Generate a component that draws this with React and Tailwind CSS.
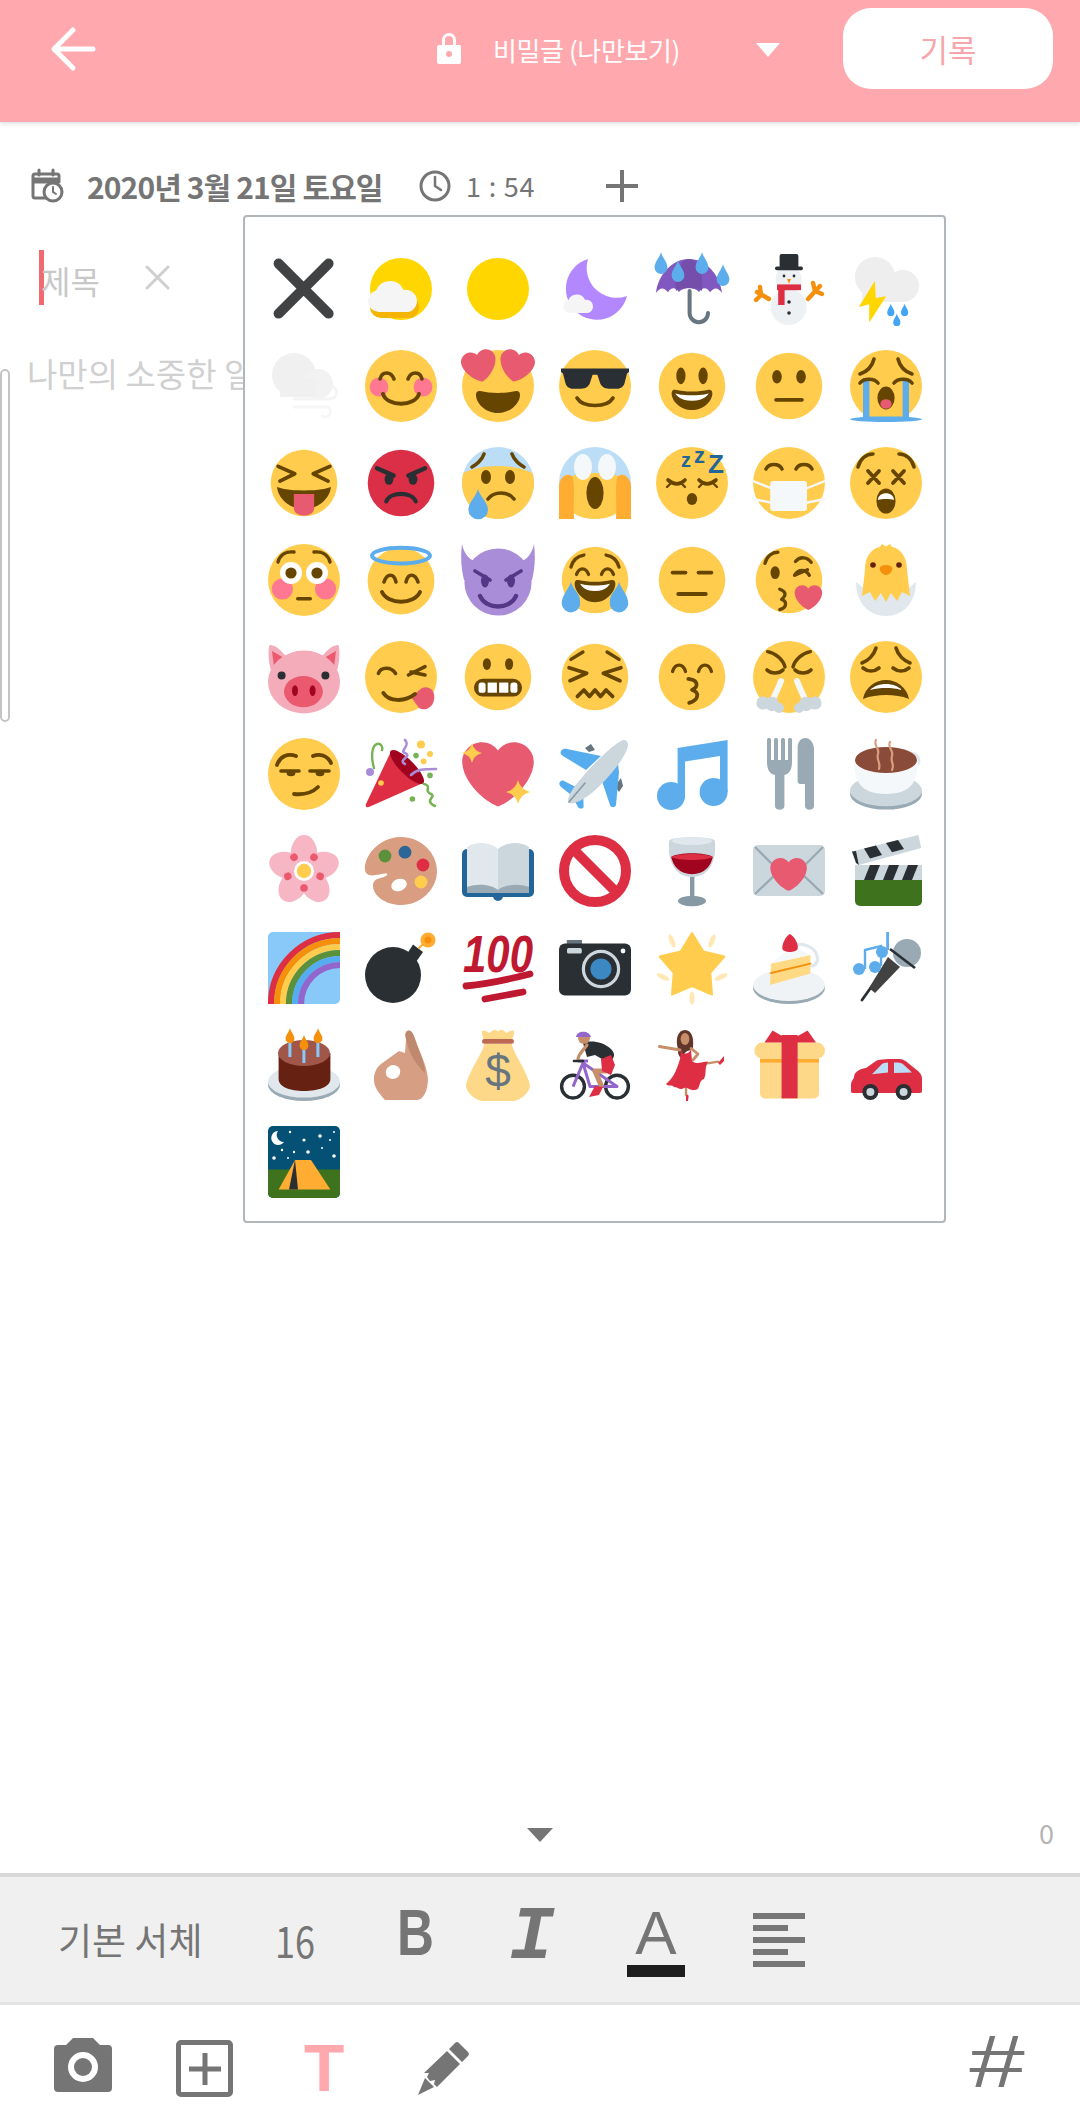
import React from 'react';

const Y = '#FFCC4D';
const B = '#664500';
const HEART = 'M35.885 11.833c0-5.45-4.418-9.868-9.867-9.868-3.308 0-6.227 1.633-8.018 4.129-1.791-2.496-4.71-4.129-8.017-4.129-5.45 0-9.868 4.417-9.868 9.868 0 .772.098 1.52.266 2.241C1.751 22.587 11.216 31.568 18 34.034c6.783-2.466 16.249-11.447 17.617-19.959.17-.721.268-1.469.268-2.242z';
const OPEN_MOUTH = 'M18 21c-3.6 0-6-.4-9-1-.7-.1-2 0-2 2 0 4 4.6 9 11 9s11-5 11-9c0-2-1.3-2.1-2-2-3 .6-5.4 1-9 1z';
const FONT = 'Liberation Sans';

const Face = ({ c = Y, children }) => (
  <>
    <circle cx="18" cy="18" r="18" fill={c} />
    {children}
  </>
);
const S = ({ d, c = B, w = 1.8 }) => (
  <path d={d} fill="none" stroke={c} strokeWidth={w} strokeLinecap="round" strokeLinejoin="round" />
);
const F = ({ d, c = B }) => <path d={d} fill={c} />;
const O = ({ x, y, r, c = B }) => <circle cx={x} cy={y} r={r} fill={c} />;
const E = ({ x, y, a = 2.5, b = 3.5, c = B, t = 0 }) => (
  <ellipse cx={x} cy={y} rx={a} ry={b} fill={c} transform={t ? `rotate(${t} ${x} ${y})` : undefined} />
);
const Cloud = ({ x, y, w, c = '#F5F5F5' }) => (
  <path
    transform={`translate(${x} ${y}) scale(${w / 25})`}
    d="M5.5 17.5A5.5 5.5 0 0 1 4 6.7 7.5 7.5 0 0 1 17.8 6.5 5.4 5.4 0 0 1 20 17.5Z"
    fill={c}
  />
);
const Heart = ({ x, y, w, c = '#E75A70', r = 0 }) => (
  <path transform={`translate(${x} ${y}) rotate(${r} ${w / 2} ${w / 2}) scale(${w / 36})`} d={HEART} fill={c} />
);
const Drop = ({ x, y, s = 1, c = '#5DADEC' }) => (
  <path transform={`translate(${x} ${y}) scale(${s})`} d="M0-4C.6-2 2-1 2 .8A2 2 0 0 1-2 .8C-2-1-.6-2 0-4z" fill={c} />
);
const Sparkle = ({ x, y, r, c = Y }) => (
  <path
    d={`M${x} ${y - r}Q${x + r * 0.2} ${y - r * 0.2} ${x + r} ${y}Q${x + r * 0.2} ${y + r * 0.2} ${x} ${y + r}Q${x - r * 0.2} ${y + r * 0.2} ${x - r} ${y}Q${x - r * 0.2} ${y - r * 0.2} ${x} ${y - r}z`}
    fill={c}
  />
);
const star5 = (cx, cy, R, r) =>
  Array.from({ length: 10 }, (_, i) => {
    const a = (Math.PI / 5) * i - Math.PI / 2;
    const q = i % 2 ? r : R;
    return `${(cx + q * Math.cos(a)).toFixed(2)},${(cy + q * Math.sin(a)).toFixed(2)}`;
  }).join(' ');

const RAINBOW = [
  [34.5, '#DD2E44'],
  [31.5, '#F4900C'],
  [28.5, '#FFCC4D'],
  [25.5, '#5C913B'],
  [22.5, '#55ACEE'],
  [19.5, '#9266CC'],
];
const STARS = [[11, 3, 0.6], [18, 7, 0.8], [26, 5, 0.9], [31, 7, 0.5], [33, 3, 0.5], [7, 12, 0.6], [13, 13, 0.6], [20, 13, 0.9], [27, 11, 0.5], [33, 15, 0.9], [3, 16, 0.9], [10, 16, 0.5]];

// small: the face takes 66px of the 72px cell
const EMOJI = [
  { n: 'close', c: <S d="M5.3 5.3L30.3 30.3M30.3 5.3L5.3 30.3" c="#414244" w={5} /> },
  { n: 'sun cloud', c: <><O x={18} y={18} r={15.5} c="#FFD600" /><Cloud x={2.5} y={15} w={25} c="#F4B400" /><Cloud x={1.5} y={12} w={25} /></> },
  { n: 'sun', c: <O x={18} y={18} r={15.5} c="#FFD600" /> },
  { n: 'moon', c: <><F d="M14.5 3A15.5 15.5 0 1 0 34 21.5 15 15 0 0 1 14.5 3z" c="#B388FF" /><Cloud x={2.3} y={19.5} w={15} /></> },
  { n: 'umbrella', c: <><S d="M16.8 19V30A4.6 4.6 0 0 0 26 30" c="#66757F" w={2} /><F d="M16.5 3C8 3 1 11 0 20 2 17 4 17 6 19.6 7.5 17 10 17 11.5 19.6 13 17 20 17 21.5 19.6 23 17 25.5 17 27 19.6 29 17 31 17 33 20 32 11 25 3 16.5 3z" c="#8157C0" /><F d="M16.5 3C12 3 9 12 10 19 12 17 21 17 23 19 24 12 21 3 16.5 3z" c="#744EAA" /><Drop x={2.5} y={6} s={1.6} /><Drop x={11} y={10} s={1.6} /><Drop x={23} y={6} s={1.6} /><Drop x={33.5} y={12} s={1.6} /></> },
  { n: 'snowman', c: <><S d="M8 23L2 19.5M4 21L1.5 23.5M4 21L3.5 17M27.5 23L33.5 16.5M31 19L34.5 20.5M31 19L30 15" c="#F4900C" w={2.2} /><O x={17.8} y={27} r={9} c="#EEF1F3" /><O x={17.8} y={13} r={6.5} c="#EEF1F3" /><rect x="13.3" y=".5" width="9.4" height="7" rx="1" fill="#292F33" /><rect x="11" y="6.8" width="14" height="1.8" rx=".9" fill="#292F33" /><O x={15.5} y={11.5} r={.7} c="#292F33" /><O x={20.5} y={11.5} r={.7} c="#292F33" /><F d="M17 13H19L18 15.4z" c="#F4900C" /><rect x="12" y="15.7" width="12" height="2.9" fill="#DD2E44" /><rect x="12.6" y="18" width="3.2" height="8" fill="#DD2E44" /><O x={18} y={24.5} r={.9} c="#292F33" /><O x={18} y={30} r={.9} c="#292F33" /></> },
  { n: 'storm', c: <><O x={12.5} y={12} r={10} c="#EEEEEE" /><O x={26.5} y={16.5} r={8} c="#EEEEEE" /><rect x="6" y="14" width="20" height="10.5" fill="#EEEEEE" /><polygon points="12.4,14 4.4,27 9.6,25.6 9.6,34.7 18.1,21.6 12.9,22.5" fill="#FFD600" /><Drop x={20.4} y={29} s={.9} c="#42A5F5" /><Drop x={27.3} y={29} s={.9} c="#42A5F5" /><Drop x={23.4} y={34} s={.9} c="#42A5F5" /></> },

  { n: 'wind', c: <><O x={13} y={12.5} r={11} c="#F0F0F0" /><O x={25} y={17} r={7.5} c="#F2F2F2" /><rect x="6" y="14" width="18" height="9.5" fill="#F0F0F0" /><S d="M13 24.5H31A3 3 0 0 0 31 18" c="#F4F4F4" w={1.4} /><S d="M13 28.5H30A2.5 2.5 0 0 1 27 33" c="#F6F6F6" w={1.4} /></> },
  { n: 'blush', c: <Face><O x={7} y={18.5} r={4.7} c="#FF7892" /><O x={29} y={18.5} r={4.7} c="#FF7892" /><S d="M7.5 14.5C8.5 10.5 13 10.5 14.5 14.5M21.5 14.5C23 10.5 27.5 10.5 28.5 14.5" /><S d="M9 22C11 28.5 25 28.5 27 22" w={2} /></Face> },
  { n: 'heart eyes', c: <Face><F d="M18 21.5c-3.6 0-6-.4-9-1-.7-.1-2 0-2 2 0 4 4.6 9 11 9s11-5 11-9c0-2-1.3-2.1-2-2-3 .6-5.4 1-9 1z" /><Heart x={0} y={-.6} w={17.5} r={-12} /><Heart x={18.5} y={-.6} w={17.5} r={12} /></Face> },
  { n: 'sunglasses', c: <Face><F d="M1 9.3H35V11L34 11.8 32.8 16.5C32.4 18.2 31 19.4 29 19.4H25C22.5 19.4 21 18 20.5 16.4L19.2 12.4H16.8L15.5 16.4C15 18 13.5 19.4 11 19.4H7C5 19.4 3.6 18.2 3.2 16.5L2 11.8 1 11z" c="#292F33" /><S d="M9 24C12 29 24 29 27 24" /></Face> },
  { n: 'smiley', small: 1, c: <Face><E x={12} y={12.5} a={2.5} b={4.5} /><E x={24} y={12.5} a={2.5} b={4.5} /><F d={OPEN_MOUTH} /><F d="M9 22s3 1 9 1 9-1 9-1-2 4-9 4-9-4-9-4z" c="#fff" /></Face> },
  { n: 'neutral', small: 1, c: <Face><E x={11.5} y={13} a={2.6} b={3.7} /><E x={24.5} y={13} a={2.6} b={3.7} /><rect x="10" y="24.5" width="16" height="2" rx="1" fill={B} /></Face> },
  { n: 'cry', c: <Face><rect x="6.5" y="14" width="3.2" height="20" fill="#5DADEC" /><rect x="26.3" y="14" width="3.2" height="20" fill="#5DADEC" /><ellipse cx="18" cy="34.6" rx="18" ry="1.4" fill="#5DADEC" /><S d="M5 12C8 11 11 8.5 12 4.5M31 12C28 11 25 8.5 24 4.5" /><S d="M5 16.5C7 14 12 14 14 16.5M22 16.5C24 14 29 14 31 16.5" /><E x={18} y={24} a={4.3} b={5.7} /><E x={18} y={27} a={2.8} b={2.4} c="#E75A70" /></Face> },

  { n: 'squint tongue', small: 1, c: <Face><S d="M4 9L13 13 5 17M32 9L23 13 31 17" w={2} /><F d="M3.5 20C5 21 10 22 18 22S31 21 32.5 20C32.5 25 27 32 18 32S3.5 25 3.5 20z" /><F d="M12.5 24H23.5V31.5C23.5 37 12.5 37 12.5 31.5z" c="#E75A70" /></Face> },
  { n: 'pout', small: 1, c: <Face c="#DA2F47"><S d="M5 10L14 14M31 10L22 14" c="#292F33" w={2.4} /><E x={11.5} y={16} a={2.4} b={3} c="#292F33" /><E x={24.5} y={16} a={2.4} b={3} c="#292F33" /><S d="M10 28C12 22.5 24 22.5 26 28" c="#292F33" w={2.2} /></Face> },
  { n: 'cold sweat', c: <><O x={18} y={18} r={18} c="#BBDDF5" /><F d="M.7 13C5 11 10 9.5 18 9.5S31 11 35.3 13A18 18 0 1 1 .7 13z" c={Y} /><S d="M5 10C7 9 10 6.5 11 3.5M31 10C29 9 26 6.5 25 3.5" /><E x={12} y={15} /><E x={24} y={15} /><S d="M13 26C16 22 23 22 26 26" /><path d="M8 21C9 25 13 27.5 13 31.5A4.9 4.6 0 0 1 3.2 31.5C3.2 27.5 7 25 8 21z" fill="#5DADEC" /></> },
  { n: 'scream', c: <><O x={18} y={18} r={18} c="#BBDDF5" /><F d="M0 20C2 15 8 13 18 13S34 15 36 20C36 28 30 36 18 36S0 28 0 20z" c={Y} /><E x={12} y={10} a={4.5} b={6.5} c="#F5F8FA" /><E x={24} y={10} a={4.5} b={6.5} c="#F5F8FA" /><E x={18} y={23} a={4.3} b={8} /><F d="M0 36V20C0 14 6 12 7 16 8 20 7 28 7.5 36z" c="#FFAC33" /><F d="M36 36V20C36 14 30 12 29 16 28 20 29 28 28.5 36z" c="#FFAC33" /></> },
  { n: 'sleeping', c: <Face><S d="M6 16.5C9 19 12 19 14.5 16.5M21.5 16.5C24 19 27 19 30 16.5" /><S d="M7 18.5L5.5 20M13 18.5L14.5 20M23 18.5L21.5 20M29 18.5L30.5 20" w={1.2} /><E x={18} y={26} a={2.6} b={3} /><text x={12.5} y={10} fontSize="10" fontWeight="bold" fontFamily={FONT} fill="#226699">z</text><text x={19} y={8} fontSize="11" fontWeight="bold" fontFamily={FONT} fill="#226699">z</text><text x={26} y={13} fontSize="13" fontWeight="bold" fontFamily={FONT} fill="#226699">Z</text></Face> },
  { n: 'mask', c: <Face><S d="M6.5 11C8 8 13 8 14.5 11M21.5 11C23 8 28 8 29.5 11" /><S d="M0 17L10 21M0 26L10 28M36 17L26 21M36 26L26 28" c="#F5F8FA" w={1.2} /><rect x="8.6" y="17" width="18.4" height="15" rx="1.5" fill="#F5F8FA" /></Face> },
  { n: 'dizzy', c: <Face><S d="M4 10C5 6 8 3.5 11.5 3.5M32 10C31 6 28 3.5 24.5 3.5" /><S d="M9 12L14.5 18M14.5 12L9 18M21.5 12L27 18M27 12L21.5 18" w={1.9} /><E x={18} y={27} a={4.8} b={6.3} /><F d="M14 26.5C14 22 22 22 22 26.5 20 25.8 16 25.8 14 26.5z" c="#fff" /></Face> },

  { n: 'flushed', c: <Face><O x={7.2} y={22.5} r={5.3} c="#FF7892" /><O x={28.8} y={22.5} r={5.3} c="#FF7892" /><S d="M5 9C6 5.5 9 3.5 13 4M31 9C30 5.5 27 3.5 23 4" w={1.7} /><O x={11.5} y={14.5} r={5.5} c="#fff" /><O x={24.5} y={14.5} r={5.5} c="#fff" /><O x={11.5} y={14.5} r={2.8} /><O x={24.5} y={14.5} r={2.8} /><rect x="14" y="26.5" width="8" height="1.8" rx=".9" fill={B} /></Face> },
  { n: 'halo', c: <><O x={18} y={18.5} r={16.7} c={Y} /><ellipse cx="18" cy="5.8" rx="14.5" ry="3.9" fill="none" stroke="#5DADEC" strokeWidth="2" /><S d="M9.5 19C11 14.5 14.5 14.5 15.5 19M20.5 19C21.5 14.5 25 14.5 26.5 19" /><S d="M8.5 24C11.5 30.5 24.5 30.5 27.5 24" w={2} /></> },
  { n: 'devil', c: <><F d="M0 0C1 5 4 9 9 9H27C32 9 35 5 36 0 37 8 36 14 35 18H1C0 14-1 8 0 0z" c="#AA8DD8" /><O x={18} y={19} r={16.8} c="#AA8DD8" /><S d="M6.5 13.5L14 18M29.5 13.5L22 18" c="#553788" /><E x={11.5} y={18.5} a={2} b={3.2} c="#553788" /><E x={24.5} y={18.5} a={2} b={3.2} c="#553788" /><S d="M9 26C12 33 24 33 27 26" c="#553788" w={2.2} /></> },
  { n: 'joy', small: 1, c: <Face><S d="M5 11C6 7 9 5 12 4.5M31 11C30 7 27 5 24 4.5" /><S d="M8 15C9.5 11 13 11 14.5 15M21.5 15C23 11 26.5 11 28 15" /><F d="M18 19c-3.6 0-6-.4-9-1-.7-.1-2 0-2 2 0 4 4.6 10 11 10s11-6 11-10c0-2-1.3-2.1-2-2-3 .6-5.4 1-9 1z" /><F d="M10 20s3 1 8 1 8-1 8-1-1.5 4-8 4-8-4-8-4z" c="#fff" /><path d="M5 19C5.8 23 10 25 10 30A5 5 0 0 1 0 31C0 26 4 23 5 19z" fill="#5DADEC" /><path d="M31 19C30.2 23 26 25 26 30A5 5 0 0 0 36 31C36 26 32 23 31 19z" fill="#5DADEC" /></Face> },
  { n: 'expressionless', small: 1, c: <Face><rect x="6.5" y="13" width="9" height="2" rx="1" fill={B} /><rect x="20.5" y="13" width="9" height="2" rx="1" fill={B} /><rect x="9.5" y="24.5" width="17" height="2.2" rx="1.1" fill={B} /></Face> },
  { n: 'kiss heart', small: 1, c: <Face><S d="M5 9C6 5 9 3 12 3M21.5 8C24 5 28 5.5 30 8.5" /><E x={10.5} y={14} a={2.5} b={3.5} /><S d="M21 15.5C23 12 27 12 29 15.5M22 15L28 12.5" /><S d="M13 23C16 24 17 26 14 28.5 17 29.5 17 33 13 34" /><Heart x={21} y={20} w={15} /></Face> },
  { n: 'chick', c: <><path d="M3 19C3 30 10 36 18 36S33 30 33 19L27 24H9z" fill="#E1E8ED" /><F d="M7.5 13C7.5 5 12 2 15 1.5L16 0 18 1.2 20 0 21 1.5C24 2 28.5 5 28.5 13L30 26 26 24 23.5 28.5 20.5 24.5 18 29 15.5 24.5 12.5 28.5 10 24 6 26z" c={Y} /><O x={11.5} y={10.5} r={1.4} c="#662113" /><O x={24.5} y={10.5} r={1.4} c="#662113" /><F d="M14.8 12C15.5 10 20.5 10 21.2 12 21 14.5 19 15.5 18 15.5 17 15.5 15 14.5 14.8 12z" c="#F4900C" /></> },

  { n: 'pig', c: <><F d="M.7 2C4 2 7 5 10 9L2 16C0 11 0 5 .7 2zM35.3 2C32 2 29 5 26 9L34 16C36 11 36 5 35.3 2z" c="#F4ABBA" /><F d="M2 5L8 8.5 3 13zM34 5L28 8.5 33 13z" c="#EA596E" /><ellipse cx="18" cy="20.5" rx="18" ry="15.7" fill="#F4ABBA" /><E x={17.7} y={25.3} a={9.7} b={7.8} c="#EA596E" /><E x={13.5} y={24.8} a={1.5} b={2.7} c="#A0041E" /><E x={22.3} y={24.8} a={1.5} b={2.7} c="#A0041E" /><O x={6.8} y={17.3} r={2} c="#292F33" /><O x={28.7} y={17.3} r={2} c="#292F33" /></> },
  { n: 'yum', c: <Face><S d="M6.7 16.2C8 12.8 13 12.8 15.3 16.2M21.7 17L30 12.8M23 15.5L30 17" /><F d="M23 28L28.5 23.5C32 22 35.5 25 34.5 29.5 33.5 34 29.5 35 27 33.5z" c="#E75A70" /><S d="M9.2 26C12 30.5 20 30.5 25 26.5" w={2} /></Face> },
  { n: 'grimace', small: 1, c: <Face><E x={12} y={11} a={2.2} b={3.2} /><E x={24} y={11} a={2.2} b={3.2} /><rect x="5" y="19" width="26" height="9.5" rx="4.7" fill={B} /><rect x="7.5" y="21" width="3.8" height="5.5" rx="1.4" fill="#fff" /><rect x="12.4" y="21" width="5" height="5.5" fill="#fff" /><rect x="18.6" y="21" width="5" height="5.5" fill="#fff" /><rect x="24.7" y="21" width="3.8" height="5.5" rx="1.4" fill="#fff" /></Face> },
  { n: 'confounded', small: 1, c: <Face><S d="M5 8.5L11.5 4.5M31 8.5L24.5 4.5" /><S d="M4 13L13.5 16 4.5 20M32 13L22.5 16 31.5 20" w={2} /><S d="M8.5 28.5L12 25 15 28.5 18 25 21 28.5 24 25 27.5 28.5" w={2} /></Face> },
  { n: 'kiss closed', small: 1, c: <Face><S d="M7.5 15C9 10.5 13 10.5 14.5 15M21.5 15C23 10.5 27 10.5 28.5 15" /><S d="M16 19C21 19.5 22 23 18 25 22 26 22 30.5 16.5 32" w={2} /></Face> },
  { n: 'triumph', c: <Face><S d="M7.3 5.3C11 6 15 9 16 13M28.7 5.3C25 6 21 9 20 13" w={1.7} /><S d="M7 14.5C9 16.5 13 16.5 15 14.5M21 14.5C23 16.5 27 16.5 29 14.5" /><S d="M14 20C12.5 24 11 27 9 31M22 20C23.5 24 25 27 27 31" c="#F5F8FA" w={3} /><O x={5} y={31} r={3.3} c="#CCD6DD" /><O x={9.5} y={31.5} r={3.6} c="#CCD6DD" /><O x={13} y={33.5} r={2.5} c="#CCD6DD" /><O x={31} y={31} r={3.3} c="#CCD6DD" /><O x={26.5} y={31.5} r={3.6} c="#CCD6DD" /><O x={23} y={33.5} r={2.5} c="#CCD6DD" /></Face> },
  { n: 'weary', c: <Face><S d="M6 11C9 10 12 7 13 3.5M30 11C27 10 24 7 23 3.5" /><S d="M6.5 13.5C9 15.5 12 15.5 14.5 13.5M21.5 13.5C24 15.5 27 15.5 29.5 13.5" /><F d="M6.5 29C7.5 23 13 19.5 18 19.5S28.5 23 29.5 29C26 27.5 22 27 18 27S10 27.5 6.5 29z" /><F d="M10 24.5C12 22.5 15 21.5 18 21.5S24 22.5 26 24.5C23 23.8 21 23.5 18 23.5S13 23.8 10 24.5z" c="#fff" /></Face> },

  { n: 'smirk', c: <Face><S d="M4.5 13.5C6 9 10 7.5 14 9M22.5 9C26 7.5 30 9 31.5 12.5" w={1.9} /><S d="M6.5 16.5H15.5M21 16.5H30.5" /><E x={11.5} y={17.5} a={2.2} b={1.6} /><E x={26} y={17.5} a={2.2} b={1.6} /><S d="M13 28C18 28.5 22 27.5 25 24.5" w={1.9} /></Face> },
  { n: 'party', c: <><F d="M13 6.7L.5 33C0 34.5 1 35 2.5 34.3L29 22.5z" c="#DD2E44" /><ellipse cx="21" cy="14.5" rx="11.5" ry="3.6" fill="#A0041E" transform="rotate(45 21 14.5)" /><S d="M4.5 15C2.5 8 4 3.5 6 3 8 2.5 9 4.5 8.5 6" c="#77B255" w={1.2} /><S d="M20 13C16 11 24 9 20 7.5 17 6.5 23 4 20 1" c="#AA8DD8" w={1.3} /><S d="M23 18.5C26 15.5 29 15.5 35.5 15.5" c="#AA8DD8" w={1.3} /><S d="M29.5 23C34 24 29 26.5 33 28 36 29.5 29 31 35 34" c="#77B255" w={1.3} /><O x={2.5} y={17} r={2} c="#AA8DD8" /><O x={28} y={3.3} r={2} c={Y} /><O x={32.5} y={8} r={1.5} c={Y} /><O x={29.3} y={11.7} r={1.5} c={Y} /><O x={25.5} y={8.8} r={1.4} c="#77B255" /><O x={32.5} y={18.7} r={1.4} c="#77B255" /><O x={23.7} y={30.5} r={1.4} c="#77B255" /><O x={8} y={22.5} r={1.4} c={Y} /></> },
  { n: 'sparkling heart', c: <><Heart x={0} y={.2} w={36} /><Sparkle x={5} y={7.5} r={5} /><Sparkle x={28} y={27} r={6} /></> },
  { n: 'airplane', c: <><F d="M13 5L16 3 18 6 15 7zM28 24L31 20 32 24 30 27z" c="#66757F" /><F d="M1 6.5C.5 7.5 1 8.5 2 9L13.5 16 21 9 4 5.5C3 5.3 1.5 5.5 1 6.5zM21 20L25.5 33.5C26 35 28 35 28.5 33.5L30 17 29 9z" c="#55ACEE" /><F d="M.2 22.5C0 23 .5 24 1 24.5L5.5 28 9.5 25 2.5 21.5C1.5 21 .5 21.5.2 22.5zM10 26L7 30 9.5 34.5C10 35.5 12 35.5 12.3 34.5L12 24z" c="#55ACEE" /><path d="M31.5 1.2C33 .5 35 2 34.5 4 33 10 26 19 17 27 12 31 7.5 33.5 5 32.5 3.5 31 6 26 10 21.5 17 13 26 4 31.5 1.2z" fill="#CCD6DD" /><S d="M5 32L13 22.5" c="#8899A6" w={.8} /></> },
  { n: 'music', c: <><F d="M10.8 5L35.8 1V27H32V9L14.5 11.8V30H10.8z" c="#5DADEC" /><O x={7.5} y={29} r={7} c="#5DADEC" /><O x={28.8} y={27} r={7} c="#5DADEC" /></> },
  { n: 'cutlery', c: <><F d="M7 1C7-.3 9-.3 9 1V11H10.5V1C10.5-.3 12.5-.3 12.5 1V11H14V1C14-.3 16-.3 16 1V11H17.5V1C17.5-.3 19.5-.3 19.5 1V12C19.5 16 18 18 15.7 18.5V34C15.7 36.5 11 36.5 11 34V18.5C8.5 18 7 16 7 12z" c="#99AAB5" /><F d="M26 0C29 0 30.5 3 30.5 6V34C30.5 36.5 26 36.5 26 34V23H23.5C23 23 22.3 22.5 22.3 21.5V5C22.3 2 24 0 26 0z" c="#99AAB5" /></> },
  { n: 'coffee', c: <><ellipse cx="18" cy="28" rx="18" ry="7.8" fill="#99AAB5" /><ellipse cx="18" cy="26.3" rx="18" ry="7.8" fill="#CCD6DD" /><S d="M27 8A5 4 0 0 1 34.5 11C34.5 13 32.5 15 31 15" c="#E1E8ED" w={1.5} /><path d="M2 11C2 20 4 28 18 28S34 20 34 11z" fill="#F5F8FA" /><ellipse cx="18" cy="11" rx="15.5" ry="6.5" fill="#8A4B38" /><S d="M13 1C11.5 4 15 5 14 8S15.5 12 14.5 15.5M20 2C18.5 5 22 6 21 9S22.5 13 21 16" c="#D99E82" w={1.1} /></> },

  { n: 'blossom', c: <>{[0, 72, 144, 216, 288].map((a) => <ellipse key={a} cx="18" cy="9.3" rx="6.6" ry="9.3" fill="#F7B6C4" transform={`rotate(${a} 18 18)`} />)}<O x={18} y={18} r={8} c="#F7B6C4" />{[36, 108, 180, 252, 324].map((a) => <circle key={a} cx="18" cy="9.5" r="1.9" fill="#EA596E" transform={`rotate(${a} 18 18)`} />)}<O x={18} y={18} r={5} c="#FFFFFF" /><O x={18} y={18} r={3.6} c={Y} /></> },
  { n: 'palette', c: <><F d="M18 1C28 1 36 9 36 18S28 35 18 35C10 35 4 30 4 25.5 4 21 9 22 11 20 12 18 5 21 2 20-1 19-.5 14 2 10 5 5 11 1 18 1z" c="#D99E82" /><O x={10} y={10.5} r={3.2} c="#5C913B" /><O x={20} y={8.6} r={3.2} c="#2A6797" /><O x={29} y={15} r={3.2} c="#DD2E44" /><O x={28} y={23.5} r={3.2} c={Y} /><E x={17} y={25} a={4} b={3} c="#fff" t={-20} /></> },
  { n: 'book', c: <><rect y="7" width="36" height="24" rx="2.5" fill="#226699" /><O x={18} y={30.5} r={2.5} c="#226699" /><F d="M2.5 6C7 3 14 3.5 18 7V28H2.5z" c="#E1E8ED" /><F d="M33.5 6C29 3 22 3.5 18 7V28H33.5z" c="#CCD6DD" /><F d="M2.5 26C8 24 15 25 18 27.5 21 25 28 24 33.5 26V29H2.5z" c="#99AAB5" /></> },
  { n: 'no entry', c: <><circle cx="18" cy="18" r="15.5" fill="none" stroke="#DD2E44" strokeWidth="5" /><path d="M7 7L29 29" stroke="#DD2E44" strokeWidth="5" /></> },
  { n: 'wine', c: <><rect x="17" y="20" width="2.2" height="13" fill="#8899A6" /><ellipse cx="18" cy="33" rx="7" ry="2.6" fill="#8899A6" /><path d="M6.6 3C7 .5 29 .5 29.4 3 30.5 12 27 21 18 21S5.5 12 6.6 3z" fill="#CCD6DD" /><ellipse cx="18" cy="3" rx="10" ry="2" fill="#E1E8ED" /><path d="M7.6 11C11 8.5 25 8.5 28.4 11 27.5 15.5 24 19.6 18 19.6S8.5 15.5 7.6 11z" fill="#A0041E" /><path d="M7.6 11C11 9 25 9 28.4 11 25 13 11 13 7.6 11z" fill="#DD2E44" /></> },
  { n: 'love letter', c: <><rect y="5" width="36" height="25.5" rx="2.5" fill="#CCD6DD" /><path d="M1 6L15 20M35 6L21 20M1 29.5L13 18M35 29.5L23 18" stroke="#99AAB5" strokeWidth="1.2" fill="none" /><Heart x={8.6} y={10.5} w={18.4} /></> },
  { n: 'clapper', c: <><rect x="2.5" y="15" width="33.5" height="20.5" rx="2.5" fill="#3E721D" /><rect x="2.5" y="15" width="33.5" height="7.5" fill="#CCD6DD" /><polygon points="7,22.5 10,15 15,15 12,22.5" fill="#292F33" /><polygon points="16.5,22.5 19.5,15 24.5,15 21.5,22.5" fill="#292F33" /><polygon points="26,22.5 29,15 34,15 31,22.5" fill="#292F33" /><polygon points="1,8.3 34.2,0 35.6,6.5 4.4,15" fill="#CCD6DD" /><polygon points="7,6.8 13,5.3 16,10 10,11.7" fill="#292F33" /><polygon points="18,4 24,2.5 27,7 21,8.6" fill="#292F33" /><polygon points="1,8.3 3,8 4.4,15 3,14" fill="#292F33" /></> },

  { n: 'rainbow', c: <><rect width="36" height="36" rx="2.5" fill="#88C9F9" />{RAINBOW.map(([r, c]) => <path key={r} d={`M${36 - r} 36A${r} ${r} 0 0 1 36 ${36 - r}`} fill="none" stroke={c} strokeWidth="3.1" />)}</> },
  { n: 'bomb', c: <><polygon points="21,11 24,6.2 29,10 25.5,15" fill="#292F33" /><circle cx="14" cy="21.5" r="14" fill="#292F33" /><S d="M27 8L30 5" c="#FFAC33" w={1} /><O x={31.5} y={4} r={3.8} c="#FFAC33" /><O x={31.5} y={4} r={1.8} c="#F4900C" /></> },
  { n: '100', c: <><text x="0.5" y="20" fontSize="26" fontWeight="bold" fontStyle="italic" fontFamily={FONT} fill="#BE1931" textLength="35" lengthAdjust="spacingAndGlyphs">100</text><S d="M2 27C12 26 22 24 34 21" c="#BE1931" w={3.4} /><S d="M11.5 33.5L30.5 30" c="#BE1931" w={3.4} /></> },
  { n: 'camera', c: <><rect x="3.9" y="4" width="7.6" height="3" fill="#66757F" /><rect y="5.7" width="36" height="26" rx="3" fill="#292F33" /><rect x="4" y="8" width="7.4" height="2.8" rx=".8" fill="#CCD6DD" /><O x={32} y={9.5} r={1.2} c="#F5F8FA" /><circle cx="21" cy="18.5" r="8.8" fill="none" stroke="#CCD6DD" strokeWidth="1.6" /><O x={21} y={18.5} r={5.3} c="#3B88C3" /></> },
  { n: 'star', c: <><E x={8} y={4.5} a={1.3} b={3.5} c="#FFE8B6" t={-22} /><E x={28} y={4.5} a={1.3} b={3.5} c="#FFE8B6" t={22} /><E x={3.5} y={22.5} a={1.3} b={3.5} c="#FFE8B6" t={-65} /><E x={32.5} y={22.5} a={1.3} b={3.5} c="#FFE8B6" t={65} /><E x={18} y={33} a={1.3} b={3.3} c="#FFE8B6" /><polygon points={star5(18, 17.5, 17, 9.6)} fill={Y} stroke={Y} strokeWidth="1" strokeLinejoin="round" /></> },
  { n: 'slice', c: <><ellipse cx="18" cy="28" rx="18" ry="8" fill="#99AAB5" /><ellipse cx="18" cy="26.5" rx="18" ry="8" fill="#F0F3F5" /><S d="M19 7C24 5 31 7 32 12 33 15 31 17 29 17" c="#E1E8ED" w={1.6} /><polygon points="9,15.7 28.7,11.5 28.7,20.7 8.5,26.5" fill="#FFD983" /><S d="M9 20.5L28.7 15.8" c="#F4900C" w={1} /><polygon points="9,15.7 20,7 28.7,11.5" fill="#F5F8FA" /><F d="M18.4 1C20.5 2 23 6 22.3 8.5 21.5 10.5 15.3 10.5 14.7 8.5 14.3 6 16.5 2 18.4 1z" c="#DD2E44" /></> },
  { n: 'mic', c: <><S d="M6 34L11 27" c="#292F33" w={1.4} /><path d="M9.5 28L19 12.5 25 17.5 12.5 30.5z" fill="#424242" /><O x={28.5} y={10.5} r={7} c="#99AAB5" /><path d="M20 8.5L32.5 18" stroke="#292F33" strokeWidth="1.3" /><path d="M7.5 18.5V9L15.5 7V17" fill="none" stroke="#5DADEC" strokeWidth="1.2" /><O x={4.5} y={18.5} r={3} c="#5DADEC" /><O x={12.5} y={17.5} r={3} c="#5DADEC" /><path d="M18.8 0V9" stroke="#5DADEC" strokeWidth="1.4" /><O x={16} y={10} r={3} c="#5DADEC" /></> },

  { n: 'birthday', c: <><ellipse cx="18" cy="28" rx="18" ry="8" fill="#99AAB5" /><ellipse cx="18" cy="26.3" rx="18" ry="8" fill="#E1E8ED" /><path d="M5.3 12V25C5.3 29 11 31 18 31S31.2 29 31.2 25V12z" fill="#662113" /><ellipse cx="18" cy="12" rx="13" ry="6.5" fill="#A0574A" /><rect x="10.2" y="6" width="1.5" height="8" fill="#88C9F9" /><rect x="17.2" y="9" width="1.5" height="8" fill="#88C9F9" /><rect x="24.2" y="6" width="1.5" height="8" fill="#88C9F9" /><Drop x={11} y={4} s={1.1} c="#F4900C" /><Drop x={18} y={7.4} s={1.1} c="#F4900C" /><Drop x={25} y={4} s={1.1} c="#F4900C" /></> },
  { n: 'ok hand', c: <><F d="M21 1C23 0 24 2 25 5 27 11 31 18 31.5 25 31.5 31 29 35.5 26 35.5H10C7 32 4 29 4.5 24 5 21 6 19 8 17.5L17 11 20 12 20.5 5C20 3 20 2 21 1z" c="#D69F84" /><F d="M21 1C23 0 24 2 25 5 27 11 30 17 30 22 26 18 22 13 20.5 5 20 3 20 2 21 1z" c="#BF8970" /><E x={14} y={21.5} a={3.7} b={3.4} c="#fff" t={-25} /></> },
  { n: 'money', c: <><F d="M11 5.5C10 3 9.5 1 10.5.8 12 .5 13 2 14 2 15 .5 16.5 0 18 1.3 19.5 0 21 .5 22 2 23 2 24 .5 25.5.8 26.5 1 26 3 25 5.5z" c="#FDD888" /><F d="M11 7.5H25C25 11 32 20 34 28 34 32 29 36 25 36H11C7 36 2 32 2 28 4 20 11 11 11 7.5z" c="#FDD888" /><rect x="10" y="5" width="16" height="2.4" rx="1.2" fill="#BF6952" /><text x="18" y="29" textAnchor="middle" fontSize="23" fontFamily={FONT} fill="#67757F">$</text></> },
  { n: 'cyclist', c: <><circle cx="7" cy="28.8" r="5.7" fill="none" stroke="#292F33" strokeWidth="1.7" /><circle cx="29" cy="28.8" r="5.7" fill="none" stroke="#292F33" strokeWidth="1.7" /><path d="M7 28.8L12 17 29 28.8H15.5L12 17M9.5 16H14.5" fill="none" stroke="#9266CC" strokeWidth="1.5" strokeLinejoin="round" /><S d="M23 21L18 21 21 28" c="#C68F6A" w={2.6} /><F d="M12 7C15 5.5 22 6 26 10 29 13 27 15 25 17L18 13 14 14z" c="#292F33" /><F d="M26 13L28 18 26 23 21.5 21 21 15z" c="#DD2E44" /><F d="M18 28.5L22 29 20 33 15 34z" c="#DD2E44" /><O x={12.5} y={4.5} r={3} c="#C68F6A" /><F d="M8.5 4C9 .5 15 .5 16 4z" c="#9266CC" /><S d="M14 8C12 11 10 12 9.5 15" c="#C68F6A" w={1.6} /><S d="M7.5 16H12" c="#292F33" w={1.3} /></> },
  { n: 'dancer', c: <><F d="M11 10C9.5 5 11 .5 14.5.5 18 .5 19 5 18.5 9 18.5 12 15 9 13.5 14 12 15 10.8 13 11 10z" c="#60352A" /><E x={14.5} y={5} a={2.2} b={3} c="#C68F6A" /><S d="M1.7 8.8L12 10.5" c="#C68F6A" w={1.5} /><S d="M17.5 9.7L21 12.5 18.5 15.5" c="#C68F6A" w={1.4} /><S d="M15 29V33" c="#C68F6A" w={1.2} /><S d="M25 17.3L31 16.3" c="#C68F6A" w={1.2} /><F d="M31 17L34 13.5 34 16 32 18z" c="#DD2E44" /><F d="M15 33.5C15.5 32.5 16 32.5 16.3 33.5L16 36H15z" c="#DD2E44" /><F d="M12.5 10.5L13.5 12.5 16 12 17.5 10.5 18 16C20 18 23 16.5 26 16.3 24 20 25.5 22 24 25 21 25.5 22.5 30.5 19.5 30.5 17 31 16 29 14 29.5 12 31 11 29 9 29 8 27.5 6 29 5 27.5 8 25 10 22 12 15z" c="#DD2E44" /></> },
  { n: 'gift', c: <><rect x="3.5" y="11.3" width="29.5" height="23.4" rx="2.5" fill="#FDD888" /><rect x=".7" y="6.8" width="35.3" height="8" rx="4" fill="#FDD888" /><rect x="3.5" y="15" width="29.5" height="1.8" fill="#FFAC33" /><polygon points="5.7,6.8 9.8,.8 15,3.8 15,6.8" fill="#DD2E44" /><polygon points="31.5,6.8 27.3,.8 22,3.8 22,6.8" fill="#DD2E44" /><rect x="14.3" y="3" width="8" height="31.7" fill="#DD2E44" /></> },
  { n: 'car', c: <><F d="M.5 31V28C.5 26 2 25 2 24 2 22 4 20 8 19.5L13 16C14 15.3 17 15 24 15 26 15 27 15.3 29 17L34 21C35 22 36 23 36 25V31C36 32 35 32 34 32H2C1 32 .5 32 .5 31z" c="#DD2E44" /><F d="M11 22.6L16 17.5C16.6 17 19 16.8 19 16.8V21.8z" c="#BBDDF5" /><F d="M22 16.8C25 16.8 26 17 27 18L31 21.8 22 22z" c="#BBDDF5" /><O x={10.2} y={31.5} r={4} c="#292F33" /><O x={10.2} y={31.5} r={2} c="#CCD6DD" /><O x={26.8} y={31.5} r={4} c="#292F33" /><O x={26.8} y={31.5} r={2} c="#CCD6DD" /></> },

  { n: 'tent', c: <><rect width="36" height="36" rx="2.5" fill="#055175" /><path d="M0 21.7H36V33.5A2.5 2.5 0 0 1 33.5 36H2.5A2.5 2.5 0 0 1 0 33.5z" fill="#3E721D" />{STARS.map(([x, y, r]) => <O key={`${x}-${y}`} x={x} y={y} r={r} c="#fff" />)}<F d="M5 2.5A3.5 3.5 0 1 0 8 8 3.5 3.5 0 0 1 5 2.5z" c="#fff" /><polygon points="13.5,17 5.3,31.7 31.2,31.7 21.5,17" fill="#FFAC33" /><polygon points="13.5,17 10.5,31.7 15,31.7" fill="#292F33" /></> },
];

function Emoji({ item }) {
  // the 66px faces get a wider viewBox, so the same drawing comes out smaller
  const box = item.small ? '-1.46 -1.46 38.92 38.92' : '0 0 36 36';
  return (
    <div className="flex items-center justify-center">
      <svg className="w-[72px] h-[72px] overflow-visible" viewBox={box} aria-label={item.n}>
        {item.c}
      </svg>
    </div>
  );
}

export default function App() {
  return (
    <div className="w-[1080px] h-[2117px] flex flex-col bg-white overflow-hidden font-['Noto_Sans_CJK_KR',sans-serif]">
      <header className="h-[122px] shrink-0 relative z-10 flex items-start bg-[#ffa9ae] shadow-[0_2px_4px_rgba(0,0,0,0.12)]">
        <svg className="ml-[50px] mt-[26px] w-[46px] h-[46px]" viewBox="0 0 46 46" fill="none" stroke="#fff" strokeWidth="5" strokeLinecap="round" strokeLinejoin="round">
          <path d="M43 23H5M23 4L4 23 23 42" />
        </svg>
        <svg className="ml-[341px] mt-[32px] w-[24px] h-[32px]" viewBox="0 0 24 32" fill="#fff">
          <path d="M5 14V8a7 7 0 0 1 14 0v6h-3V8a4 4 0 0 0-8 0v6z" />
          <path fillRule="evenodd" d="M2 13h20a2 2 0 0 1 2 2v15a2 2 0 0 1-2 2H2a2 2 0 0 1-2-2V15a2 2 0 0 1 2-2zm10 6a3 3 0 1 0 0 6 3 3 0 0 0 0-6z" />
        </svg>
        <span className="ml-[32px] mt-[33px] w-[185px] text-[26px] leading-[34px] text-white whitespace-nowrap tracking-[-0.4px]">비밀글 (나만보기)</span>
        <div className="ml-[78px] mt-[43px] w-0 h-0 border-x-[12.5px] border-x-transparent border-t-[14px] border-t-white" />
        <button className="ml-[63px] mt-[8px] w-[210px] h-[81px] rounded-[28px] bg-white text-[#f8a5ab] text-[31px] leading-none">기록</button>
      </header>

      <main className="flex-1 relative flex flex-col">
        <div className="flex items-center h-[36px] mt-[46px] pl-[31px] text-[#757575]">
          <svg className="w-[33px] h-[36px]" viewBox="0 0 33 36" fill="none" stroke="#757575" strokeWidth="3" strokeLinecap="round">
            <path d="M14 30H4a2 2 0 0 1-2-2V8a2 2 0 0 1 2-2h22a2 2 0 0 1 2 2v6" />
            <path d="M2 12.5H28" strokeWidth="6" strokeLinecap="butt" />
            <path d="M8 2v5M22 2v5" />
            <circle cx="22" cy="24" r="9" />
            <path d="M22 19v5l3 2" strokeWidth="2" />
          </svg>
          <span className="ml-[23px] w-[296px] text-[30px] leading-[36px] font-bold whitespace-nowrap tracking-[-0.9px]">2020년 3월 21일 토요일</span>
          <svg className="ml-[36px] w-[32px] h-[32px]" viewBox="0 0 32 32" fill="none" stroke="#757575" strokeWidth="3" strokeLinecap="round" strokeLinejoin="round">
            <circle cx="16" cy="16" r="14" />
            <path d="M16 7v9l6 4" strokeWidth="2.5" />
          </svg>
          <span className="ml-[15px] w-[68px] text-[27px] leading-[36px] whitespace-nowrap tracking-[0.8px]">1 : 54</span>
          <svg className="ml-[72px] w-[32px] h-[32px]" viewBox="0 0 32 32" stroke="#757575" strokeWidth="4">
            <path d="M16 0V32M0 16H32" />
          </svg>
        </div>

        <div className="flex items-center h-[56px] mt-[45px] pl-[39px]">
          <div className="w-[5px] h-[55px] bg-[#f06a6f]" />
          <span className="-ml-[3px] mt-[6px] text-[32px] leading-[40px] text-[#c8c8c8] whitespace-nowrap">제목</span>
          <svg className="ml-[45px] w-[25px] h-[25px]" viewBox="0 0 25 25" stroke="#cfcfcf" strokeWidth="3" strokeLinecap="round">
            <path d="M2 2L23 23M23 2L2 23" />
          </svg>
        </div>

        <p className="mt-[46px] pl-[27px] text-[33px] leading-[44px] text-[#d0d0d0] whitespace-nowrap">나만의 소중한 일상을 기록해 보세요</p>

        <div className="absolute left-0 top-[247px] w-[10px] h-[353px] bg-white border-2 border-[#c4c4c4] rounded-[5px]" />

        <div className="absolute left-[243px] top-[93px] w-[703px] h-[1008px] z-20 bg-white border-2 border-[#b1b6bb] rounded-[4px] pl-[10px] pt-[23px]">
          <div className="grid grid-cols-[repeat(7,97px)] auto-rows-[97px]">
            {EMOJI.map((item) => (
              <Emoji key={item.n} item={item} />
            ))}
          </div>
        </div>

        <div className="mt-auto h-[60px] grid grid-cols-[1fr_auto_1fr]">
          <div />
          <div className="mt-[15px] w-0 h-0 border-x-[13px] border-x-transparent border-t-[14px] border-t-[#757575]" />
          <span className="justify-self-end mr-[26px] mt-[2px] text-[27px] leading-[36px] text-[#b4b4b4]">0</span>
        </div>
      </main>

      <div className="h-[132px] shrink-0 flex items-start bg-[#f0f0f0] border-t-4 border-t-[#d8d8d8] border-b-[3px] border-b-[#e4e4e4] text-[#757575]">
        <span className="ml-[58px] mt-[38px] w-[145px] text-[37px] leading-[48px] whitespace-nowrap">기본 서체</span>
        <span className="ml-[72px] mt-[34px] w-[42px] text-[44px] leading-[56px] scale-x-[0.82] origin-left">16</span>
        <span className="ml-[80px] mt-[26px] w-[40px] text-[64px] leading-[60px] font-bold scale-x-[0.8] origin-left font-['Liberation_Sans',sans-serif]">B</span>
        <span className="ml-[72px] mt-[31px] w-[46px] text-[76px] leading-[60px] font-bold italic font-['Liberation_Mono',monospace]">I</span>
        <div className="ml-[72px] mt-[26px] w-[58px] flex flex-col items-center">
          <span className="text-[62px] leading-[60px] font-['Liberation_Sans',sans-serif]">A</span>
          <div className="mt-[2px] w-[58px] h-[12px] bg-[#1e1e1e]" />
        </div>
        <div className="ml-[68px] mt-[36px] w-[52px] flex flex-col gap-[6px]">
          <div className="h-[6px] w-[52px] bg-[#777777]" />
          <div className="h-[6px] w-[35px] bg-[#777777]" />
          <div className="h-[6px] w-[52px] bg-[#777777]" />
          <div className="h-[6px] w-[35px] bg-[#777777]" />
          <div className="h-[6px] w-[52px] bg-[#777777]" />
        </div>
      </div>

      <div className="h-[112px] shrink-0 flex items-start text-[#757575]">
        <svg className="ml-[54px] mt-[33px] w-[58px] h-[54px]" viewBox="0 0 58 54" fill="#757575">
          <path fillRule="evenodd" d="M19 0h20l7 7h8a4 4 0 0 1 4 4v39a4 4 0 0 1-4 4H4a4 4 0 0 1-4-4V11a4 4 0 0 1 4-4h8zM29 14a15 15 0 1 0 0 30 15 15 0 0 0 0-30z" />
          <circle cx="29" cy="29" r="9" />
        </svg>
        <div className="ml-[64px] mt-[35px] w-[57px] h-[57px] flex items-center justify-center border-[5px] border-[#757575] rounded-[5px]">
          <svg className="w-[32px] h-[32px]" viewBox="0 0 32 32" stroke="#757575" strokeWidth="5">
            <path d="M16 0V32M0 16H32" />
          </svg>
        </div>
        <span className="ml-[71px] mt-[30px] text-[66px] leading-[66px] font-bold text-[#ffa9ae] font-['Liberation_Sans',sans-serif]">T</span>
        <svg className="ml-[73px] mt-[37px] w-[52px] h-[53px]" viewBox="0 0 52 53" fill="#757575">
          <path d="M38 1a3 3 0 0 1 4 0l9 9a3 3 0 0 1 0 4l-6 6-13-13zM30 9l13 13-23 23-3-3 1-4-5 1-3-4 2-4-5 0z" />
          <path d="M8 36l9 9-16 8z" />
        </svg>
        <span className="ml-auto mr-[54px] mt-[20px] w-[58px] text-center text-[74px] leading-[74px] scale-x-[1.35] font-['Liberation_Sans',sans-serif]">#</span>
      </div>
    </div>
  );
}
